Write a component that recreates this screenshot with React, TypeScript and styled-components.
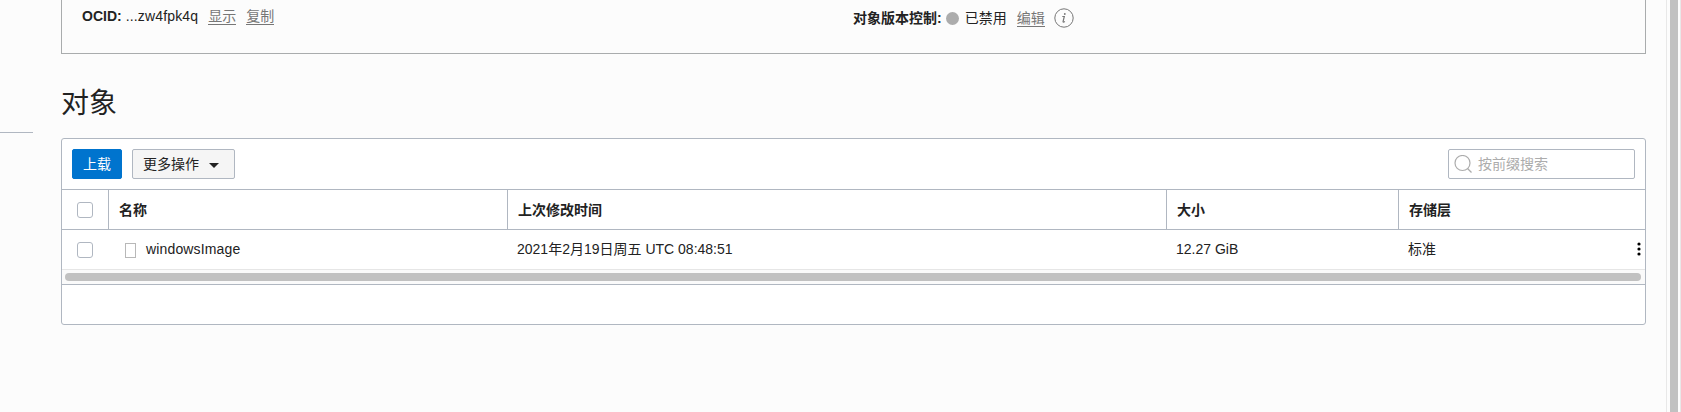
import React from 'react';
import styled, { createGlobalStyle } from 'styled-components';

const line = '#b0b7c1';

const GlobalStyle = createGlobalStyle`
  * { box-sizing: border-box; }
  body {
    margin: 0;
    background: #fcfcfc;
    color: #222;
    font: 14px/20px "Liberation Sans", "Noto Sans CJK SC", sans-serif;
    overflow: hidden;
  }
`;

const Page = styled.div`
  display: flex;
  height: 412px;
  overflow: hidden;
`;

const Sidebar = styled.aside`
  width: 33px;
  height: 133px;
  border-bottom: 1px solid ${line};
`;

const Main = styled.main`
  width: 1585px;
  margin-left: 28px;
`;

const PageScroll = styled.div`
  display: flex;
  width: 15px;
  margin-left: 20px;
  padding-left: 3px;
  border: solid #e8e8e8;
  border-width: 0 1px;
`;

const PageThumb = styled.div`
  width: 8px;
  background: #c1c1c1;
`;

const Details = styled.section`
  display: grid;
  grid-template-columns: 771px 1fr;
  align-items: start;
  height: 54px;
  padding-left: 20px;
  border: solid #a9acad;
  border-width: 0 1px 1px;
`;

const Field = styled.div<{ $top: number }>`
  display: flex;
  align-items: center;
  height: 20px;
  margin-top: ${(p) => p.$top}px;
  white-space: nowrap;
`;

const Label = styled.b`
  font-weight: 700;
`;

const Value = styled.span<{ $gap: number; $spacing?: number }>`
  margin-left: ${(p) => p.$gap}px;
  letter-spacing: ${(p) => p.$spacing ?? 0}px;
`;

const Link = styled.a`
  margin-left: 10px;
  height: 17px;
  line-height: 17px;
  color: #767676;
  border-bottom: 1px solid #767676;
`;

const Dot = styled.i`
  width: 13px;
  height: 13px;
  margin-left: 4px;
  border-radius: 50%;
  background: #acacac;
`;

const InfoIcon = styled.svg`
  width: 20px;
  height: 20px;
  margin-left: 9px;
`;

const Title = styled.h1`
  margin: 30px 0 14px;
  height: 40px;
  font-size: 28px;
  line-height: 40px;
  font-weight: 400;
`;

const Card = styled.section`
  height: 187px;
  border: 1px solid ${line};
  border-radius: 3px;
  background: #fff;
`;

const Toolbar = styled.div`
  display: flex;
  align-items: center;
  gap: 10px;
  height: 51px;
  padding: 0 10px;
  border-bottom: 1px solid ${line};
`;

const Button = styled.button<{ $primary?: boolean }>`
  display: flex;
  align-items: center;
  gap: 10px;
  height: 30px;
  width: ${(p) => (p.$primary ? 50 : 103)}px;
  padding: 0 10px;
  border: 1px solid ${(p) => (p.$primary ? '#0074ce' : line)};
  border-radius: 2px;
  background: ${(p) => (p.$primary ? '#0074ce' : '#f5f5f5')};
  color: ${(p) => (p.$primary ? '#fff' : '#222')};
  font: inherit;
  white-space: nowrap;
`;

const Caret = styled.svg`
  width: 10px;
  height: 5px;
  margin-top: 2px;
`;

const Search = styled.label`
  display: flex;
  align-items: center;
  gap: 5px;
  width: 187px;
  height: 30px;
  margin-left: auto;
  padding-left: 5px;
  border: 1px solid ${line};
  border-radius: 2px;
  color: #acacac;
`;

const Row = styled.div<{ $head?: boolean }>`
  display: grid;
  grid-template-columns: 46px 399px 659px 232px 1fr;
  height: 40px;
  border-bottom: 1px solid ${(p) => (p.$head ? line : '#e6e6e6')};
  font-weight: ${(p) => (p.$head ? 700 : 400)};
`;

const Cell = styled.div<{ $ruled?: boolean; $indent?: number; $raised?: boolean }>`
  display: flex;
  align-items: center;
  padding-left: ${(p) => p.$indent ?? 10}px;
  padding-bottom: ${(p) => (p.$raised ? 2 : 0)}px;
  border-left: ${(p) => (p.$ruled ? `1px solid ${line}` : '0')};
  white-space: nowrap;
`;

const Name = styled.span`
  letter-spacing: 0.15px;
`;

const Checkbox = styled.input`
  appearance: none;
  width: 16px;
  height: 16px;
  margin: 0;
  border: 1px solid ${line};
  border-radius: 3px;
  background: #fff;
`;

const FileIcon = styled.i`
  width: 11px;
  height: 15px;
  margin: 3px 10px 0 0;
  border: 1px solid #b8b8b8;
`;

const Menu = styled.svg`
  width: 4px;
  height: 14px;
  margin: 1px 4px 0 auto;
`;

const Track = styled.div`
  height: 15px;
  padding: 3px 4px 3px 3px;
  background: #fafafa;
  border-bottom: 1px solid ${line};
`;

const Thumb = styled.div`
  height: 8px;
  border-radius: 4px;
  background: #c1c1c1;
`;

export default function App() {
  return (
    <Page>
      <GlobalStyle />
      <Sidebar />
      <Main>
        <Details>
          <Field $top={6}>
            <Label>OCID:</Label>
            <Value $gap={4} $spacing={0.16}>...zw4fpk4q</Value>
            <Link>显示</Link>
            <Link>复制</Link>
          </Field>
          <Field $top={8}>
            <Label>对象版本控制:</Label>
            <Dot />
            <Value $gap={6}>已禁用</Value>
            <Link>编辑</Link>
            <InfoIcon viewBox="0 0 20 20" fill="none" stroke="#767676">
              <circle cx="10" cy="10" r="9.2" />
              <path d="M8.3 8.5h2l-1.2 4.8c-.3 1.2.8 1 1.7 0" strokeWidth="1.2" />
              <circle cx="10.8" cy="6" r=".9" fill="#767676" stroke="none" />
            </InfoIcon>
          </Field>
        </Details>
        <Title>对象</Title>
        <Card>
          <Toolbar>
            <Button $primary>上载</Button>
            <Button>
              更多操作
              <Caret viewBox="0 0 10 5"><path d="M0 0h10L5 5z" fill="#222" /></Caret>
            </Button>
            <Search>
              <svg width="19" height="19" viewBox="0 0 19 19" fill="none" stroke="#acacac" strokeWidth="1.2">
                <circle cx="8.5" cy="8" r="7.5" />
                <path d="M13.5 13.5l4 4" />
              </svg>
              按前缀搜索
            </Search>
          </Toolbar>
          <Row $head>
            <Cell $indent={15}><Checkbox type="checkbox" /></Cell>
            <Cell $ruled>名称</Cell>
            <Cell $ruled>上次修改时间</Cell>
            <Cell $ruled>大小</Cell>
            <Cell $ruled>存储层</Cell>
          </Row>
          <Row>
            <Cell $indent={15}><Checkbox type="checkbox" /></Cell>
            <Cell $indent={17} $raised><FileIcon /><Name>windowsImage</Name></Cell>
            <Cell $raised>2021年2月19日周五 UTC 08:48:51</Cell>
            <Cell $raised>12.27 GiB</Cell>
            <Cell $raised>
              标准
              <Menu viewBox="0 0 4 14">
                <circle cx="2" cy="2" r="1.6" />
                <circle cx="2" cy="7" r="1.6" />
                <circle cx="2" cy="12" r="1.6" />
              </Menu>
            </Cell>
          </Row>
          <Track><Thumb /></Track>
        </Card>
      </Main>
      <PageScroll><PageThumb /></PageScroll>
    </Page>
  );
}
